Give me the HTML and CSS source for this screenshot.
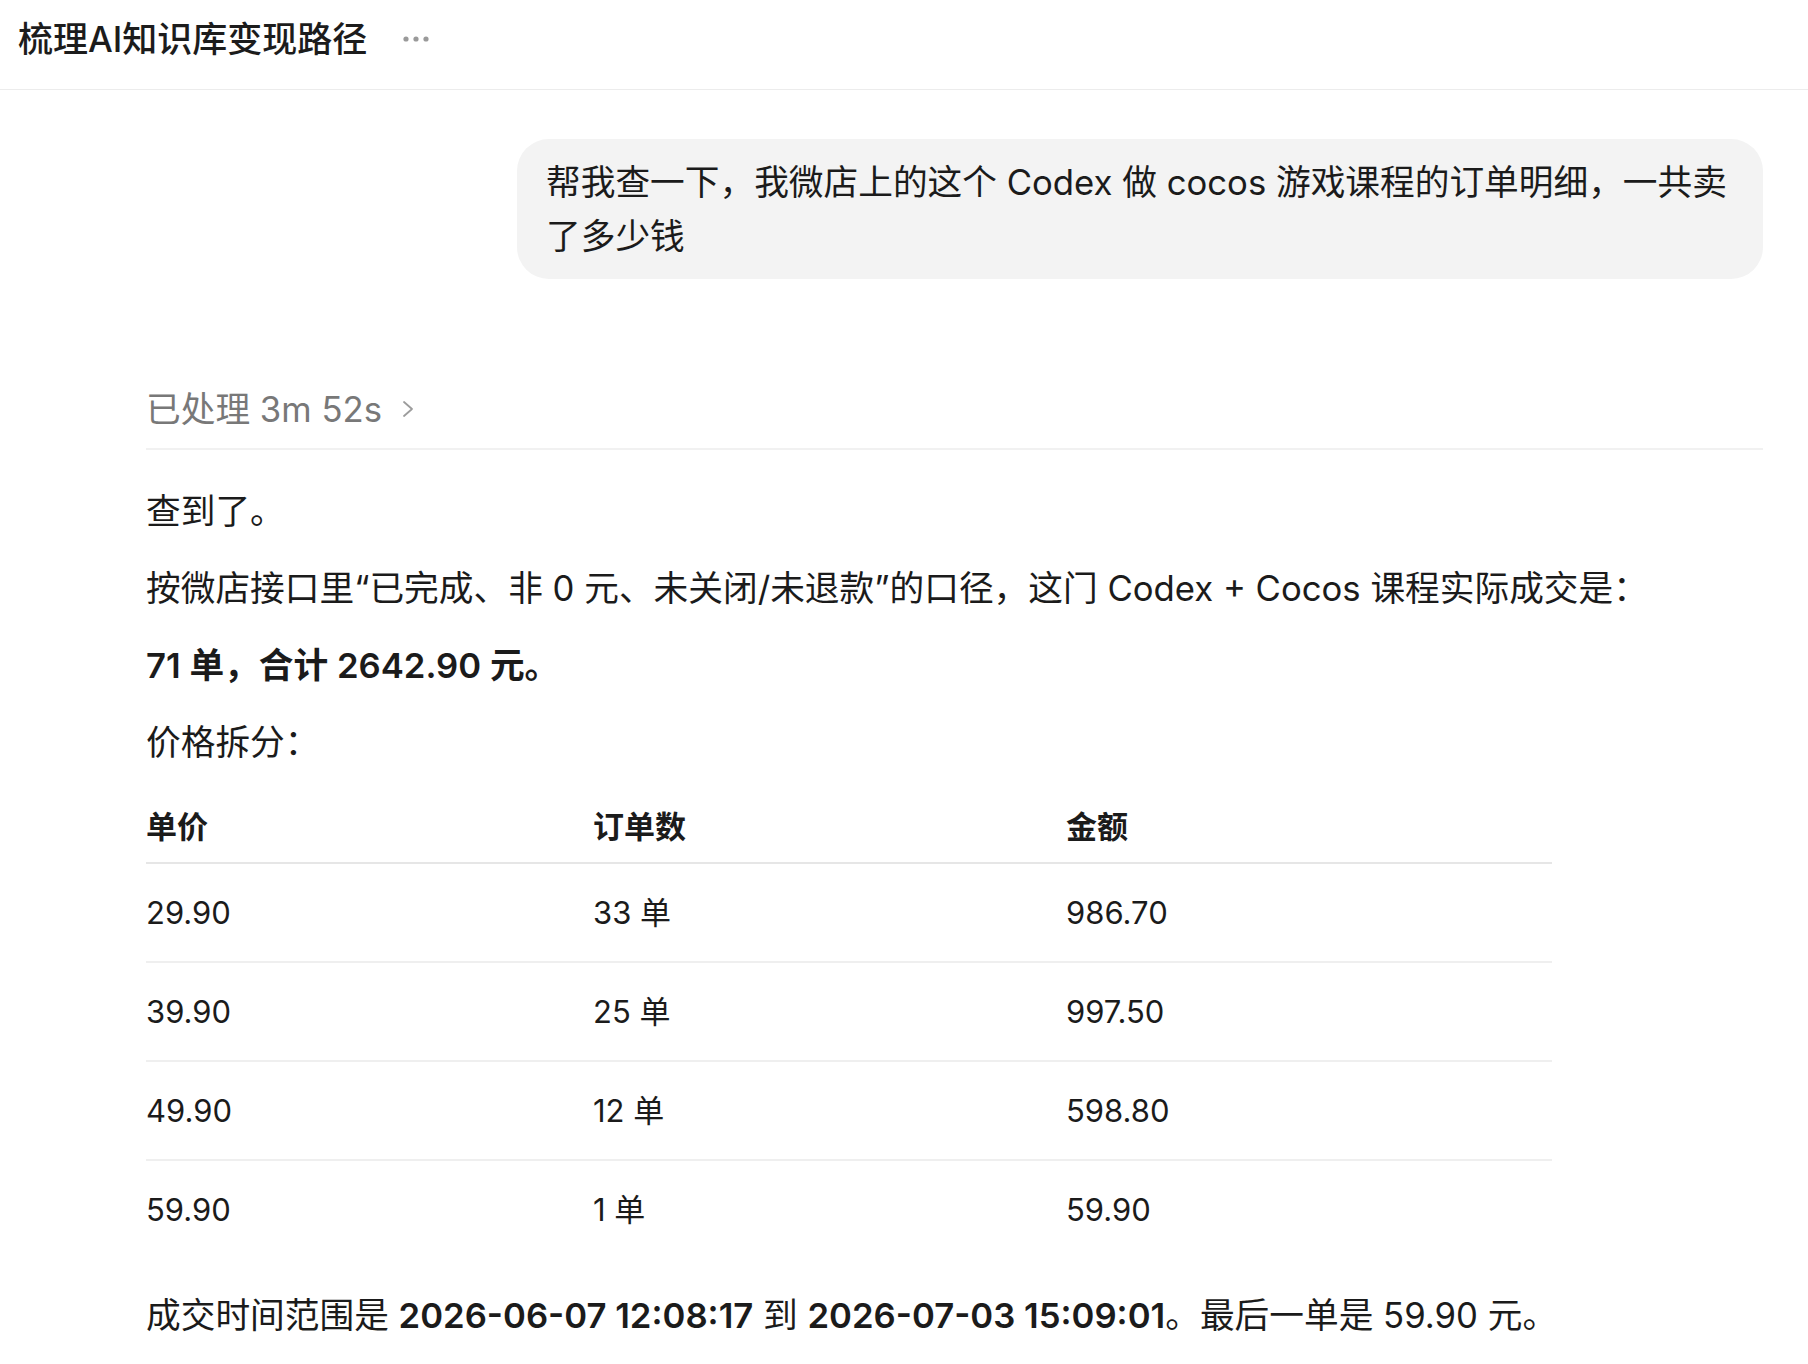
FILE: index.html
```html
<!DOCTYPE html>
<html lang="zh-CN">
<head>
  <meta charset="UTF-8">
  <meta name="viewport" content="width=device-width, initial-scale=1.0">
  <title>梳理AI知识库变现路径</title>
  <link rel="stylesheet" href="styles.css">
</head>
<body>
  <header class="topbar">
    <h1 class="topbar-title">梳理AI知识库变现路径</h1>
    <button class="more-btn" aria-label="更多">
      <svg width="26" height="6" viewBox="0 0 26 6"><circle cx="3" cy="3" r="2.6"/><circle cx="13" cy="3" r="2.6"/><circle cx="23" cy="3" r="2.6"/></svg>
    </button>
  </header>

  <main class="thread">
    <div class="user-row">
      <div class="user-bubble">帮我查一下，我微店上的这个 Codex 做 cocos 游戏课程的订单明细，一共卖了多少钱</div>
    </div>

    <div class="worked">
      <span>已处理 3m 52s</span>
      <svg class="chev" width="12" height="18" viewBox="0 0 12 18"><polyline points="2,2 10,9 2,16"/></svg>
    </div>

    <div class="answer">
      <p>查到了。</p>
      <p>按微店接口里“已完成、非 0 元、未关闭/未退款”的口径，这门 Codex + Cocos 课程实际成交是：</p>
      <p><strong>71 单，合计 2642.90 元。</strong></p>
      <p>价格拆分：</p>
      <table class="price-table">
        <colgroup>
          <col class="c1"><col class="c2"><col class="c3">
        </colgroup>
        <thead>
          <tr><th>单价</th><th>订单数</th><th>金额</th></tr>
        </thead>
        <tbody>
          <tr><td>29.90</td><td>33 单</td><td>986.70</td></tr>
          <tr><td>39.90</td><td>25 单</td><td>997.50</td></tr>
          <tr><td>49.90</td><td>12 单</td><td>598.80</td></tr>
          <tr><td>59.90</td><td>1 单</td><td>59.90</td></tr>
        </tbody>
      </table>
      <p>成交时间范围是 <strong>2026-06-07 12:08:17</strong> 到 <strong>2026-07-03 15:09:01</strong>。最后一单是 59.90 元。</p>
    </div>
  </main>
</body>
</html>
```

FILE: styles.css
```css
* {
  box-sizing: border-box;
}
body {
  margin: 0;
  background: #fff;
  color: #1b1b1b;
  font-family: "Inter", "Noto Sans CJK SC", sans-serif;
  font-size: 34.7px;
  line-height: 54px;
  overflow: hidden;
}

/* header */
.topbar {
  display: flex;
  align-items: center;
  gap: 36px;
  padding: 12px 18px 23px;
  border-bottom: 1px solid #ececec;
}
.topbar-title {
  margin: 0;
  font-size: 35px;
  font-weight: 500;
  line-height: 54px;
  color: #1c1c1c;
}
.more-btn {
  border: none;
  background: none;
  padding: 0;
  display: flex;
  fill: #9a9a9a;
}

/* thread */
.thread {
  padding: 49px 45px 0 146px;
}
.user-row {
  display: flex;
  justify-content: flex-end;
}
.user-bubble {
  max-width: 1246px;
  padding: 16px 29px;
  border-radius: 32px;
  background: #f3f3f3;
}

.worked {
  display: flex;
  align-items: center;
  gap: 20px;
  margin-top: 103px;
  padding-bottom: 12px;
  border-bottom: 2px solid #f1f1f1;
  color: #787878;
}
.chev {
  fill: none;
  stroke: #9c9c9c;
  stroke-width: 1.8;
  stroke-linecap: round;
  stroke-linejoin: round;
}

.answer {
  padding-top: 11px;
}
.answer p {
  margin: 23px 0;
}
.answer strong {
  font-weight: 600;
}

/* table */
.price-table {
  width: 1406px;
  border-collapse: collapse;
  table-layout: fixed;
  margin: 23px 0 30px;
  font-size: 31px;
}
.price-table .c1 { width: 447px; }
.price-table .c2 { width: 473px; }
.price-table .c3 { width: 486px; }
.price-table th {
  text-align: left;
  font-weight: 600;
  padding: 8px 0;
  border-bottom: 2px solid #e6e6e6;
}
.price-table td {
  padding: 22px 0 21px;
  border-bottom: 2px solid #efefef;
}
.price-table tbody tr:last-child td {
  border-bottom: none;
}
```
